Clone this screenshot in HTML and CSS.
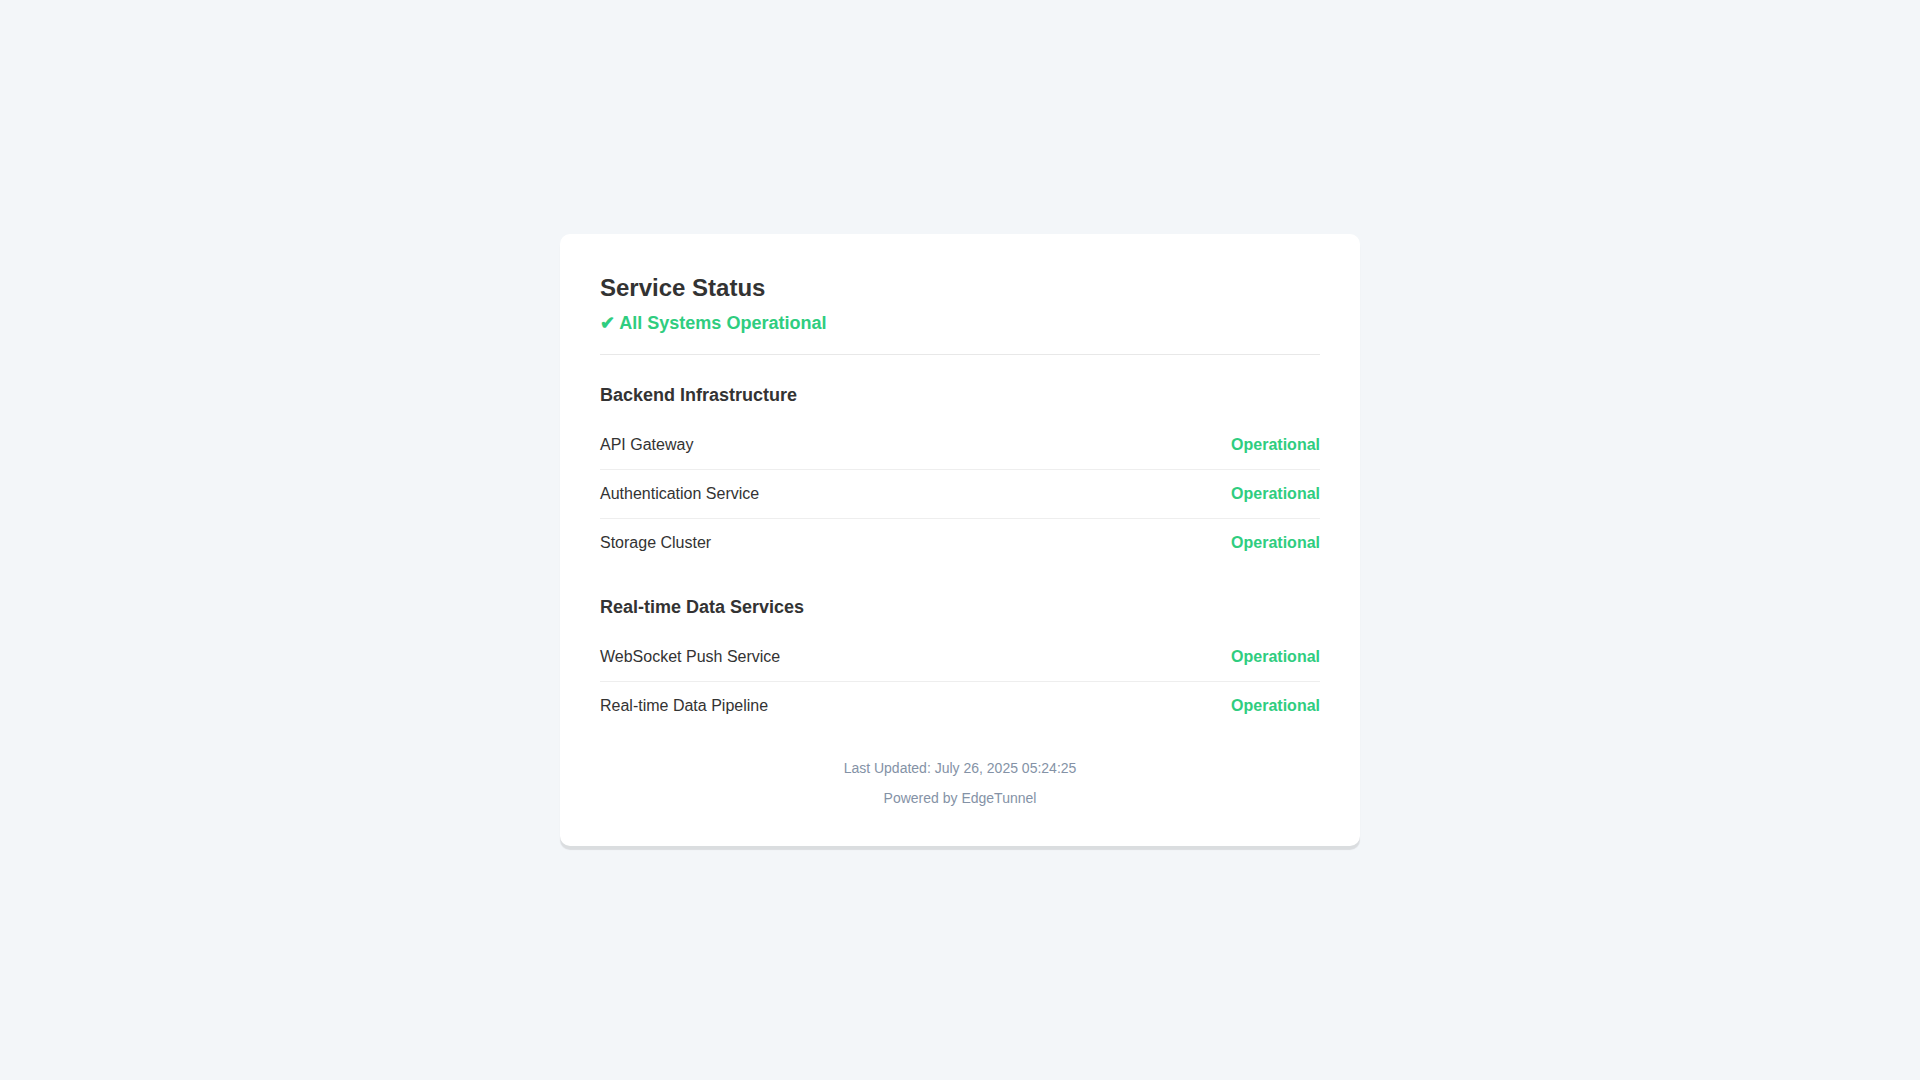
FILE: index.html
```html
<!DOCTYPE html>
<html lang="en">
<head>
<meta charset="utf-8">
<title>Service Status</title>
<link rel="stylesheet" href="styles.css">
</head>
<body>
<main class="card">
  <header class="card-header">
    <h1 class="title">Service Status</h1>
    <div class="overall">✔ All Systems Operational</div>
  </header>

  <section class="group">
    <h2 class="group-title">Backend Infrastructure</h2>
    <ul class="services">
      <li class="service"><span class="name">API Gateway</span><span class="state">Operational</span></li>
      <li class="service"><span class="name">Authentication Service</span><span class="state">Operational</span></li>
      <li class="service"><span class="name">Storage Cluster</span><span class="state">Operational</span></li>
    </ul>
  </section>

  <section class="group">
    <h2 class="group-title">Real-time Data Services</h2>
    <ul class="services">
      <li class="service"><span class="name">WebSocket Push Service</span><span class="state">Operational</span></li>
      <li class="service"><span class="name">Real-time Data Pipeline</span><span class="state">Operational</span></li>
    </ul>
  </section>

  <footer class="footer">
    <div class="footer-line">Last Updated: July 26, 2025 05:24:25</div>
    <div class="footer-line footer-powered">Powered by EdgeTunnel</div>
  </footer>
</main>
</body>
</html>
```

FILE: styles.css
```css
* {
  box-sizing: border-box;
}

html, body {
  margin: 0;
  padding: 0;
}

body {
  min-height: 100vh;
  display: flex;
  align-items: center;
  justify-content: center;
  background: #f3f6f9;
  font-family: "Liberation Sans", Arial, sans-serif;
  color: #333333;
}

.card {
  width: 800px;
  background: #ffffff;
  border-radius: 10px;
  padding: 40px 40px 38px;
  box-shadow: 0 4px 1px rgba(0, 0, 0, 0.1);
}

.card-header {
  padding-bottom: 19px;
  border-bottom: 1px solid #e8e8e8;
}

.title {
  margin: 0 0 9px;
  font-size: 24px;
  line-height: 28px;
  font-weight: 700;
  color: #333333;
}

.overall {
  font-size: 18px;
  line-height: 24px;
  font-weight: 700;
  color: #2fcd7f;
}

.group {
  margin-top: 28px;
}

.group-title {
  margin: 0 0 14px;
  font-size: 18px;
  line-height: 24px;
  font-weight: 700;
  color: #333333;
}

.services {
  list-style: none;
  margin: 0;
  padding: 0;
}

.service {
  display: flex;
  justify-content: space-between;
  align-items: center;
  padding: 12px 0;
  font-size: 16px;
  line-height: 24px;
  border-bottom: 1px solid #eeeeee;
}

.service:last-child {
  border-bottom: none;
}

.name {
  color: #333333;
}

.state {
  color: #2fcd7f;
  font-weight: 700;
}

.footer {
  margin-top: 28px;
  text-align: center;
  font-size: 14px;
  line-height: 20px;
  color: #8492a6;
}

.footer-powered {
  margin-top: 10px;
}
```
